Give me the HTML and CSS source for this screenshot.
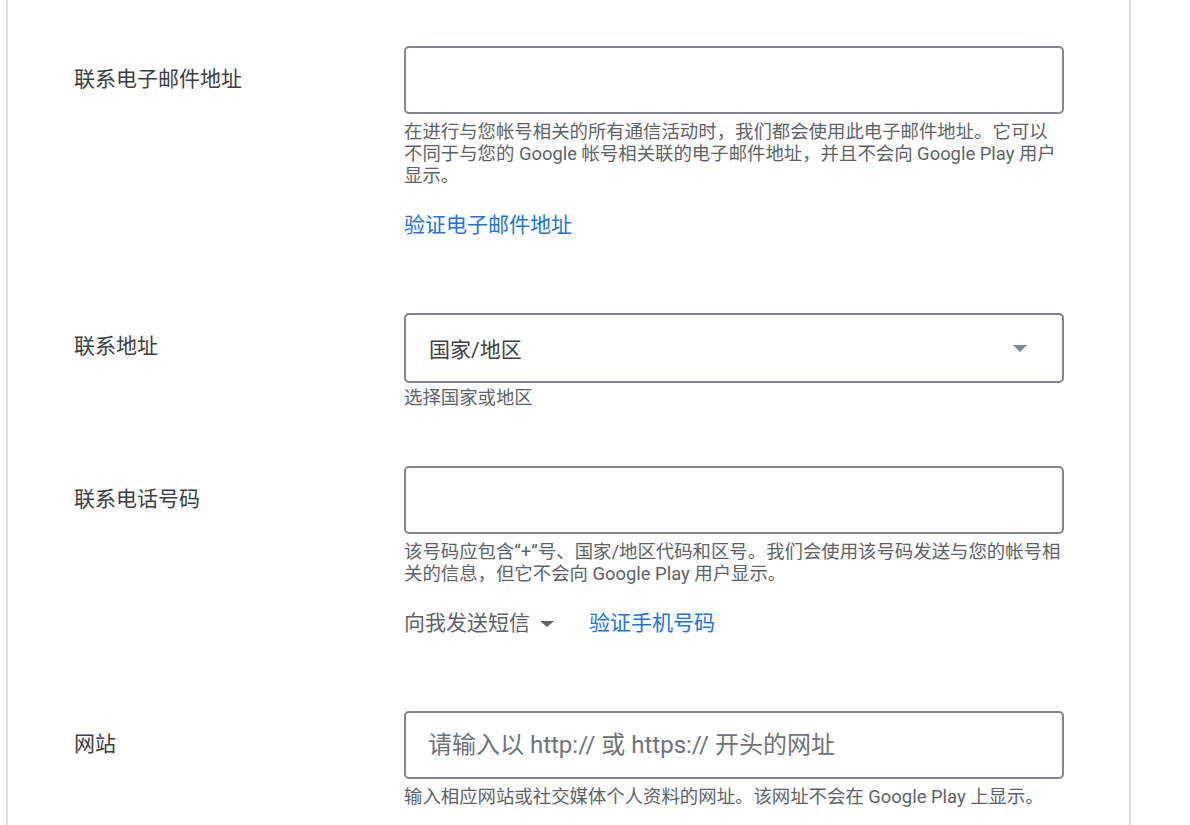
FILE: index.html
```html
<!DOCTYPE html>
<html lang="zh-CN">
<head>
<meta charset="utf-8">
<title>联系信息</title>
<link rel="stylesheet" href="styles.css">
</head>
<body>
<div class="page">
  <div class="row">
    <div class="label">联系电子邮件地址</div>
    <div class="field">
      <input class="text-input" type="text">
      <p class="help">在进行与您帐号相关的所有通信活动时，我们都会使用此电子邮件地址。它可以不同于与您的 Google 帐号相关联的电子邮件地址，并且不会向 Google Play 用户显示。</p>
      <div class="actions"><a class="link" href="#">验证电子邮件地址</a></div>
    </div>
  </div>

  <div class="row">
    <div class="label">联系地址</div>
    <div class="field">
      <div class="select"><span>国家/地区</span><span class="caret"></span></div>
      <p class="help help-tight">选择国家或地区</p>
    </div>
  </div>

  <div class="row">
    <div class="label">联系电话号码</div>
    <div class="field">
      <input class="text-input" type="text">
      <p class="help">该号码应包含“+”号、国家/地区代码和区号。我们会使用该号码发送与您的帐号相关的信息，但它不会向 Google Play 用户显示。</p>
      <div class="actions">
        <span class="menu">向我发送短信<span class="caret caret-small"></span></span>
        <a class="link" href="#">验证手机号码</a>
      </div>
    </div>
  </div>

  <div class="row">
    <div class="label">网站</div>
    <div class="field">
      <input class="text-input url-input" type="text" placeholder="请输入以 http:// 或 https:// 开头的网址">
      <p class="help">输入相应网站或社交媒体个人资料的网址。该网址不会在 Google Play 上显示。</p>
    </div>
  </div>
</div>
</body>
</html>
```

FILE: styles.css
```css
* { box-sizing: border-box; }

html, body {
  margin: 0;
  padding: 0;
  background: #ffffff;
}

body {
  font-family: Roboto, "Noto Sans CJK SC", sans-serif;
  color: #3c4043;
}

.page {
  margin-left: 6px;
  width: 1125px;
  min-height: 100vh;
  border-left: 2px solid #dadce0;
  border-right: 2px solid #dadce0;
  padding: 46px 0 60px 66px;
}

.row {
  display: grid;
  grid-template-columns: 330px 660px;
}

.row + .row {
  margin-top: 57px;
}

.label {
  font-size: 21px;
  line-height: 28px;
  margin-top: 19px;
  color: #3c4043;
}

.field {
  display: flex;
  flex-direction: column;
}

.text-input {
  display: block;
  width: 660px;
  height: 68px;
  margin: 0;
  border: 2px solid #80868b;
  border-radius: 5px;
  padding: 0 22px;
  font-family: Roboto, "Noto Sans CJK SC", sans-serif;
  font-size: 21px;
  color: #3c4043;
  background: #fff;
  outline: none;
}

.url-input {
  font-size: 24px;
}

.text-input::placeholder {
  color: #6f7378;
  opacity: 1;
}

.select {
  height: 70px;
  border: 2px solid #80868b;
  border-radius: 5px;
  padding: 0 35px 0 23px;
  display: flex;
  align-items: center;
  justify-content: space-between;
  font-size: 21px;
  color: #3c4043;
}

.caret {
  width: 0;
  height: 0;
  border-left: 7px solid transparent;
  border-right: 7px solid transparent;
  border-top: 7px solid #80868b;
}

.caret-small {
  border-left-width: 7.5px;
  border-right-width: 7.5px;
  border-top: 6px solid #5f6368;
  margin-left: 10px;
  margin-top: 2px;
}

.help {
  margin: 7px 0 0;
  font-size: 18.4px;
  line-height: 22px;
  color: #5f6368;
}

.help-tight {
  margin-top: 4px;
}

.actions {
  margin-top: 24px;
  margin-bottom: 17px;
  display: flex;
  align-items: center;
  font-size: 21px;
  line-height: 28px;
}

.menu {
  display: inline-flex;
  align-items: center;
  color: #5f6368;
  margin-right: 35px;
}

.link {
  color: #1a73e8;
  text-decoration: none;
}
```
